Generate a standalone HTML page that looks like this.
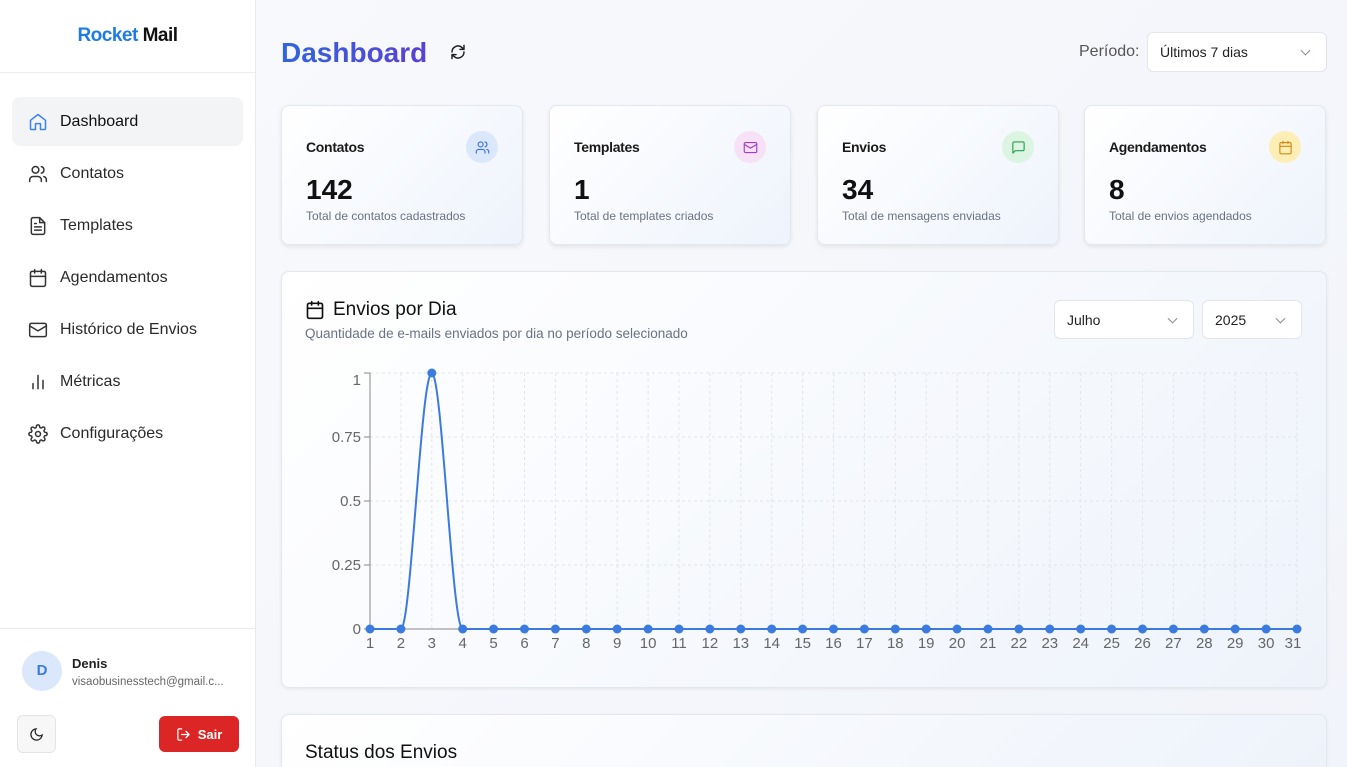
<!DOCTYPE html>
<html style="overflow:hidden;height:767px"><head><meta charset="utf-8"><style>
*{box-sizing:border-box;margin:0;padding:0}
body{width:1347px;height:767px;overflow:hidden;font-family:"Liberation Sans",sans-serif;background:#f5f7fb;position:relative;color:#111}
.side{position:absolute;left:0;top:0;width:256px;height:767px;background:#fff;border-right:1px solid #e8eaee;z-index:2}
.logo{height:73px;border-bottom:1px solid #eceef1;text-align:center;font-weight:bold;font-size:19px;padding-top:25px;letter-spacing:-0.5px}
.logo b{color:#1e7be6}
.nav{position:absolute;left:12px;width:231px;height:49px;border-radius:8px;display:flex;align-items:center;padding-left:16px;font-size:16px;color:#2a2a2a}
.nav svg{width:20px;height:20px;margin-right:12px;fill:none;stroke:#333;stroke-width:1.8;stroke-linecap:round;stroke-linejoin:round}
.nav.act{background:#f3f4f6;color:#111}
.nav.act svg{stroke:#3b82f6}
.foot{position:absolute;left:0;top:628px;width:255px;border-top:1px solid #e8eaee;height:139px}
.av{position:absolute;left:22px;top:22px;width:40px;height:40px;border-radius:50%;background:#dbe7fb;color:#3b7be0;font-weight:bold;text-align:center;line-height:40px;font-size:15px}
.main{position:absolute;left:256px;top:0;right:0;bottom:0;background:linear-gradient(135deg,#f8f9fc,#f1f4fa)}
.h1{position:absolute;left:281px;top:37px;font-size:28px;font-weight:bold;background:linear-gradient(90deg,#2f66dc,#5b3fd6);-webkit-background-clip:text;color:transparent}
.sel{position:absolute;background:#fff;border:1px solid #e2e5ea;border-radius:6px;font-size:14px;color:#222;padding-left:12px;display:flex;align-items:center}
.sel::after{content:"";position:absolute;right:17px;top:50%;width:6px;height:6px;border-right:1.3px solid #888;border-bottom:1.3px solid #888;transform:translateY(-70%) rotate(45deg)}
.card{position:absolute;top:105px;width:242px;height:140px;background:linear-gradient(135deg,#fff,#eef3fc);border:1px solid #e3e7ee;border-radius:8px;box-shadow:0 2px 4px rgba(0,0,0,.08)}
.card .t{position:absolute;left:24px;top:33px;font-size:14px;font-weight:bold;color:#1a1a1a;letter-spacing:-0.3px}
.card .n{position:absolute;left:24px;top:68px;font-size:28px;font-weight:bold;color:#111}
.card .s{position:absolute;left:24px;top:103px;font-size:12px;color:#6b7280}
.card .ic{position:absolute;right:24px;top:25px;width:32px;height:32px;border-radius:50%;display:flex;align-items:center;justify-content:center}
.card .ic svg{width:15px;height:15px;fill:none;stroke-width:1.8;stroke-linecap:round;stroke-linejoin:round}
.panel{position:absolute;left:281px;width:1046px;background:linear-gradient(135deg,#fff,#eef3fb);border:1px solid #e3e7ee;border-radius:8px;box-shadow:0 1px 3px rgba(0,0,0,.07)}
</style></head><body>
<div class="side">
<div class="logo"><b>Rocket</b> Mail</div>
<div class="nav act" style="top:97px"><svg viewBox="0 0 24 24"><path d="M3 10l9-7 9 7v10a1 1 0 0 1-1 1h-5v-7H9v7H4a1 1 0 0 1-1-1z"/></svg>Dashboard</div>
<div class="nav" style="top:149px"><svg viewBox="0 0 24 24"><circle cx="9" cy="7" r="4"/><path d="M2 21v-2a4 4 0 0 1 4-4h6a4 4 0 0 1 4 4v2M16 3.1a4 4 0 0 1 0 7.8M22 21v-2a4 4 0 0 0-3-3.9"/></svg>Contatos</div>
<div class="nav" style="top:201px"><svg viewBox="0 0 24 24"><path d="M14 2H6a2 2 0 0 0-2 2v16a2 2 0 0 0 2 2h12a2 2 0 0 0 2-2V8z"/><path d="M14 2v6h6M16 13H8M16 17H8M10 9H8"/></svg>Templates</div>
<div class="nav" style="top:253px"><svg viewBox="0 0 24 24"><rect x="3" y="4" width="18" height="18" rx="2"/><path d="M16 2v4M8 2v4M3 10h18"/></svg>Agendamentos</div>
<div class="nav" style="top:305px"><svg viewBox="0 0 24 24"><rect x="2" y="4" width="20" height="16" rx="2"/><path d="M22 7l-10 6L2 7"/></svg>Histórico de Envios</div>
<div class="nav" style="top:357px"><svg viewBox="0 0 24 24"><path d="M6 20v-6M12 20V4M18 20v-10"/></svg>Métricas</div>
<div class="nav" style="top:409px"><svg viewBox="0 0 24 24"><circle cx="12" cy="12" r="3"/><path d="M19.4 15a1.65 1.65 0 0 0 .33 1.82l.06.06a2 2 0 1 1-2.83 2.83l-.06-.06a1.65 1.65 0 0 0-1.82-.33 1.65 1.65 0 0 0-1 1.51V21a2 2 0 1 1-4 0v-.09A1.65 1.65 0 0 0 9 19.4a1.65 1.65 0 0 0-1.82.33l-.06.06a2 2 0 1 1-2.830-2.83l.06-.06a1.65 1.65 0 0 0 .33-1.82 1.65 1.65 0 0 0-1.51-1H3a2 2 0 1 1 0-4h.09A1.65 1.65 0 0 0 4.6 9a1.65 1.65 0 0 0-.33-1.82l-.06-.06a2 2 0 1 1 2.83-2.83l.06.06a1.65 1.65 0 0 0 1.82.33H9a1.65 1.65 0 0 0 1-1.51V3a2 2 0 1 1 4 0v.09a1.65 1.65 0 0 0 1 1.51 1.65 1.65 0 0 0 1.82-.33l.06-.06a2 2 0 1 1 2.83 2.83l-.06.06a1.65 1.65 0 0 0-.33 1.82V9a1.65 1.65 0 0 0 1.51 1H21a2 2 0 1 1 0 4h-.09a1.65 1.65 0 0 0-1.51 1z"/></svg>Configurações</div>
<div class="foot">
<div class="av">D</div>
<div style="position:absolute;left:72px;top:27px;font-size:13px;font-weight:bold;color:#222">Denis</div>
<div style="position:absolute;left:72px;top:47px;font-size:11.5px;color:#666">visaobusinesstech@gmail.c...</div>
<div style="position:absolute;left:17px;top:86px;width:39px;height:38px;border:1px solid #e2e4e8;border-radius:6px;background:#f7f7f8;display:flex;align-items:center;justify-content:center"><svg width="15" height="15" viewBox="0 0 24 24" fill="none" stroke="#222" stroke-width="2" stroke-linecap="round"><path d="M21 12.8A9 9 0 1 1 11.2 3a7 7 0 0 0 9.8 9.8z"/></svg></div>
<div style="position:absolute;left:159px;top:87px;width:80px;height:36px;border-radius:6px;background:#dc2626;color:#fff;font-size:13px;font-weight:bold;display:flex;align-items:center;justify-content:center;gap:7px"><svg width="15" height="15" viewBox="0 0 24 24" fill="none" stroke="#fff" stroke-width="2" stroke-linecap="round" stroke-linejoin="round"><path d="M9 21H5a2 2 0 0 1-2-2V5a2 2 0 0 1 2-2h4M16 17l5-5-5-5M21 12H9"/></svg>Sair</div>
</div>
</div>
<div class="main"></div>
<div class="h1">Dashboard</div>
<svg style="position:absolute;left:450px;top:44px" width="16" height="16" viewBox="0 0 24 24" fill="none" stroke="#222" stroke-width="2.2" stroke-linecap="round" stroke-linejoin="round"><path d="M21 2v6h-6M3 12a9 9 0 0 1 15-6.7L21 8M3 22v-6h6M21 12a9 9 0 0 1-15 6.7L3 16"/></svg>
<div style="position:absolute;left:1079px;top:43px;font-size:16px;color:#555">Período:</div>
<div class="sel" style="left:1147px;top:32px;width:180px;height:40px">Últimos 7 dias</div>

<div class="card" style="left:281px"><div class="t">Contatos</div><div class="ic" style="background:#dbe7fb"><svg viewBox="0 0 24 24" stroke="#3b6fd8"><circle cx="9" cy="7" r="4"/><path d="M2 21v-2a4 4 0 0 1 4-4h6a4 4 0 0 1 4 4v2M16 3.1a4 4 0 0 1 0 7.8M22 21v-2a4 4 0 0 0-3-3.9"/></svg></div><div class="n">142</div><div class="s">Total de contatos cadastrados</div></div>
<div class="card" style="left:549px"><div class="t">Templates</div><div class="ic" style="background:#f6e1f7"><svg viewBox="0 0 24 24" stroke="#a23bc9"><rect x="2" y="4" width="20" height="16" rx="2"/><path d="M22 7l-10 6L2 7"/></svg></div><div class="n">1</div><div class="s">Total de templates criados</div></div>
<div class="card" style="left:817px"><div class="t">Envios</div><div class="ic" style="background:#dcf5e3"><svg viewBox="0 0 24 24" stroke="#22a04b"><path d="M21 15a2 2 0 0 1-2 2H7l-4 4V5a2 2 0 0 1 2-2h14a2 2 0 0 1 2 2z"/></svg></div><div class="n">34</div><div class="s">Total de mensagens enviadas</div></div>
<div class="card" style="left:1084px"><div class="t">Agendamentos</div><div class="ic" style="background:#fdeeb5"><svg viewBox="0 0 24 24" stroke="#d08a12"><rect x="3" y="4" width="18" height="18" rx="2"/><path d="M16 2v4M8 2v4M3 10h18"/></svg></div><div class="n">8</div><div class="s">Total de envios agendados</div></div>

<div class="panel" style="top:271px;height:417px"></div>
<svg style="position:absolute;left:305px;top:300px" width="20" height="20" viewBox="0 0 24 24" fill="none" stroke="#111" stroke-width="2" stroke-linecap="round"><rect x="3" y="4" width="18" height="18" rx="2"/><path d="M16 2v4M8 2v4M3 10h18"/></svg>
<div style="position:absolute;left:333px;top:299px;font-size:19px;color:#111">Envios por Dia</div>
<div style="position:absolute;left:305px;top:326px;font-size:13.5px;color:#6b7280">Quantidade de e-mails enviados por dia no período selecionado</div>
<div class="sel" style="left:1054px;top:300px;width:140px;height:39px">Julho</div>
<div class="sel" style="left:1202px;top:300px;width:100px;height:39px">2025</div>

<svg style="position:absolute;left:0;top:0" width="1347" height="767" font-family="Liberation Sans" font-size="15">
<g stroke="#e1e4ea" stroke-dasharray="3 3" fill="none">
<path d="M370 373H1297M370 437H1297M370 501H1297M370 565H1297"/>
<path d="M400.9 373V629M431.8 373V629M462.7 373V629M493.6 373V629M524.5 373V629M555.4 373V629M586.3 373V629M617.2 373V629M648.1 373V629M679 373V629M709.9 373V629M740.8 373V629M771.7 373V629M802.6 373V629M833.5 373V629M864.4 373V629M895.3 373V629M926.2 373V629M957.1 373V629M988 373V629M1018.9 373V629M1049.8 373V629M1080.7 373V629M1111.6 373V629M1142.5 373V629M1173.4 373V629M1204.3 373V629M1235.2 373V629M1266.1 373V629M1297 373V629"/>
</g>
<path d="M370 373V629H1297M364 373H370M364 437H370M364 501H370M364 565H370M364 629H370" fill="none" stroke="#888" stroke-width="1"/>
<g text-anchor="end" fill="#666"><text x="361" y="385">1</text><text x="361" y="442">0.75</text><text x="361" y="506">0.5</text><text x="361" y="570">0.25</text><text x="361" y="634">0</text></g>
<path d="M370 629L400.9 629C411 629 421 373 431.8 373C442 373 452 629 462.7 629L1297 629" fill="none" stroke="#3b7be0" stroke-width="2"/>
<g fill="#3b7be0">
<circle cx="370" cy="629" r="4.5"/><circle cx="400.9" cy="629" r="4.5"/><circle cx="431.8" cy="373" r="4.5"/><circle cx="462.7" cy="629" r="4.5"/><circle cx="493.6" cy="629" r="4.5"/><circle cx="524.5" cy="629" r="4.5"/><circle cx="555.4" cy="629" r="4.5"/><circle cx="586.3" cy="629" r="4.5"/><circle cx="617.2" cy="629" r="4.5"/><circle cx="648.1" cy="629" r="4.5"/><circle cx="679" cy="629" r="4.5"/><circle cx="709.9" cy="629" r="4.5"/><circle cx="740.8" cy="629" r="4.5"/><circle cx="771.7" cy="629" r="4.5"/><circle cx="802.6" cy="629" r="4.5"/><circle cx="833.5" cy="629" r="4.5"/><circle cx="864.4" cy="629" r="4.5"/><circle cx="895.3" cy="629" r="4.5"/><circle cx="926.2" cy="629" r="4.5"/><circle cx="957.1" cy="629" r="4.5"/><circle cx="988" cy="629" r="4.5"/><circle cx="1018.9" cy="629" r="4.5"/><circle cx="1049.8" cy="629" r="4.5"/><circle cx="1080.7" cy="629" r="4.5"/><circle cx="1111.6" cy="629" r="4.5"/><circle cx="1142.5" cy="629" r="4.5"/><circle cx="1173.4" cy="629" r="4.5"/><circle cx="1204.3" cy="629" r="4.5"/><circle cx="1235.2" cy="629" r="4.5"/><circle cx="1266.1" cy="629" r="4.5"/><circle cx="1297" cy="629" r="4.5"/>
</g>
<g text-anchor="middle" fill="#666">
<text x="370" y="648">1</text><text x="400.9" y="648">2</text><text x="431.8" y="648">3</text><text x="462.7" y="648">4</text><text x="493.6" y="648">5</text><text x="524.5" y="648">6</text><text x="555.4" y="648">7</text><text x="586.3" y="648">8</text><text x="617.2" y="648">9</text><text x="648.1" y="648">10</text><text x="679" y="648">11</text><text x="709.9" y="648">12</text><text x="740.8" y="648">13</text><text x="771.7" y="648">14</text><text x="802.6" y="648">15</text><text x="833.5" y="648">16</text><text x="864.4" y="648">17</text><text x="895.3" y="648">18</text><text x="926.2" y="648">19</text><text x="957.1" y="648">20</text><text x="988" y="648">21</text><text x="1018.9" y="648">22</text><text x="1049.8" y="648">23</text><text x="1080.7" y="648">24</text><text x="1111.6" y="648">25</text><text x="1142.5" y="648">26</text><text x="1173.4" y="648">27</text><text x="1204.3" y="648">28</text><text x="1235.2" y="648">29</text><text x="1266.1" y="648">30</text><text x="1293" y="648">31</text>
</g>
</svg>

<div class="panel" style="top:714px;height:53px;border-bottom:none;border-radius:8px 8px 0 0"></div>
<div style="position:absolute;left:305px;top:742px;font-size:19px;color:#111">Status dos Envios</div>
</body></html>
